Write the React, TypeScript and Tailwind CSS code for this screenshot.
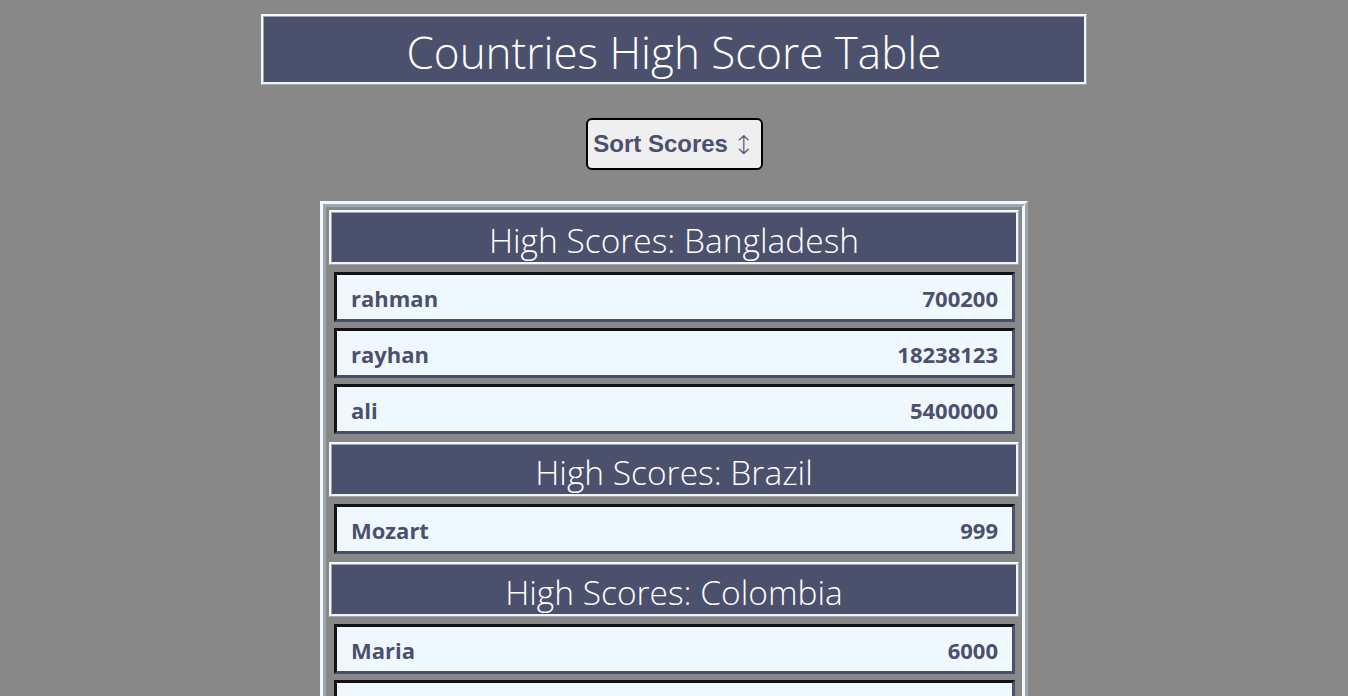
import React from "react";

interface Score {
  name: string;
  score: number;
}

interface Country {
  name: string;
  scores: Score[];
}

const countries: Country[] = [
  {
    name: "Bangladesh",
    scores: [
      { name: "rahman", score: 700200 },
      { name: "rayhan", score: 18238123 },
      { name: "ali", score: 5400000 },
    ],
  },
  { name: "Brazil", scores: [{ name: "Mozart", score: 999 }] },
  {
    name: "Colombia",
    scores: [
      { name: "Maria", score: 6000 },
      { name: "Jose", score: 5000 },
    ],
  },
];

function ScoreRow({ name, score }: Score) {
  return (
    <div className="ml-[5px] mr-[4px] flex h-[50px] items-center justify-between border-[3px] border-[#4b506d] bg-[#f0f8ff] px-[14px] pt-[3px] text-[22px] font-bold text-[#4b506d] [border-style:inset] [font-family:'Open_Sans',sans-serif]">
      <span>{name}</span>
      <span>{score}</span>
    </div>
  );
}

function CountryTable({ country }: { country: Country }) {
  return (
    <div className="flex flex-col gap-[6px]">
      <div className="mb-[1px] flex h-[55px] items-center justify-center border-[3px] border-[#f0f8ff] bg-[#4b506d] pt-[6px] text-[33.5px] font-light text-white [border-style:ridge] [font-family:'Open_Sans',sans-serif]">
        High Scores: {country.name}
      </div>
      {country.scores.map((s) => (
        <ScoreRow key={s.name} name={s.name} score={s.score} />
      ))}
    </div>
  );
}

export default function App() {
  return (
    <div className="flex min-h-screen flex-col items-center bg-[#888888] pt-[14px]">
      <h1 className="flex h-[71px] w-[826px] items-center justify-center border-[3px] border-[#f0f8ff] bg-[#4b506d] pt-[5px] text-[44px] font-light text-white [border-style:ridge] [font-family:'Open_Sans',sans-serif]">
        Countries High Score Table
      </h1>
      <button className="mt-[33px] flex h-[52px] w-[177px] items-center justify-center gap-[5px] rounded-[6px] border-2 border-black bg-[#efefef] text-[24px] font-bold text-[#4b506d] [font-family:'Liberation_Sans',Arial,sans-serif]">
        Sort Scores
        <span className="text-[26px] font-light text-[#5a5f78] [font-family:'Noto_Sans','DejaVu_Sans',sans-serif]">↕</span>
      </button>
      <div className="mt-[31px] flex w-[708px] flex-col gap-[8px] border-[6px] border-[#f0f8ff] p-[3px] [border-style:ridge]">
        {countries.map((c) => (
          <CountryTable key={c.name} country={c} />
        ))}
      </div>
    </div>
  );
}
